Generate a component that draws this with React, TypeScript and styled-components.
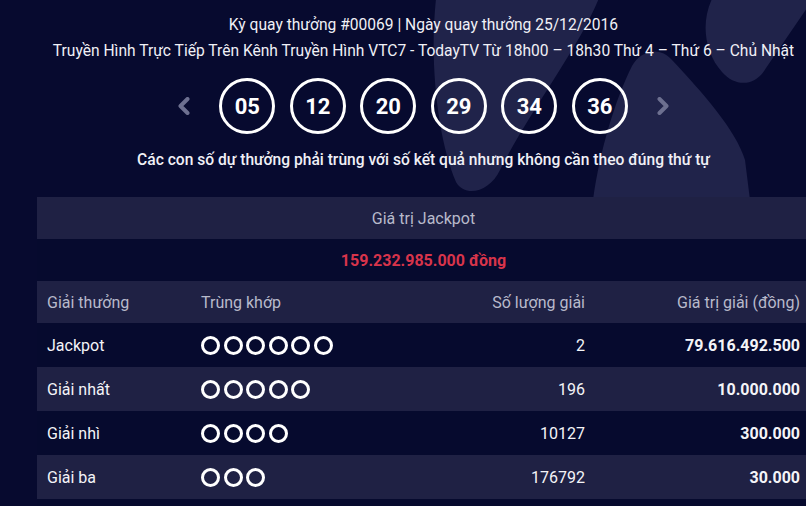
import React from "react";
import styled, { createGlobalStyle } from "styled-components";

const GlobalStyle = createGlobalStyle`
  html, body {
    margin: 0;
    padding: 0;
    background: #070a2f;
    overflow: hidden;
  }
  body {
    font-family: Roboto, "Noto Sans", "Liberation Sans", sans-serif;
    color: #f2f2f7;
  }
  * { box-sizing: border-box; }
`;

const Page = styled.div`
  position: relative;
  width: 806px;
  height: 506px;
  overflow: hidden;
  background: #070a2f;
`;

const Watermark = styled.svg`
  position: absolute;
  top: 0;
  left: 0;
  z-index: 0;
`;

const Content = styled.div`
  position: relative;
  z-index: 1;
  width: 773px;
  margin-left: 37px;
  padding-top: 12px;
  display: flex;
  flex-direction: column;
  align-items: center;
`;

const InfoLine = styled.div`
  font-size: 15.6px;
  line-height: 26px;
  white-space: nowrap;
  text-align: center;
  color: #f0f0f6;
`;

const BallRow = styled.div`
  display: flex;
  align-items: center;
  margin-top: 14px;
  height: 56px;
`;

const Arrow = styled.svg`
  width: 13px;
  height: 18px;
  flex: none;
`;

const Balls = styled.div`
  display: flex;
  gap: 14.5px;
  margin: 0 29px;
`;

const Ball = styled.div`
  width: 56px;
  height: 56px;
  border: 3px solid #ffffff;
  border-radius: 50%;
  display: flex;
  align-items: center;
  justify-content: center;
  font-size: 22px;
  font-weight: 700;
  color: #ffffff;
`;

const Note = styled.div`
  margin-top: 13px;
  font-size: 15.6px;
  line-height: 26px;
  font-weight: 500;
  white-space: nowrap;
  color: #f0f0f6;
`;

const Table = styled.div`
  align-self: stretch;
  margin-top: 24px;
  display: flex;
  flex-direction: column;
`;

const BannerRow = styled.div<{ $alt?: boolean; $red?: boolean }>`
  height: 42px;
  display: flex;
  align-items: center;
  justify-content: center;
  font-size: 16px;
  background: ${(p) => (p.$alt ? "#1f2144" : "#060a2e")};
  color: ${(p) => (p.$red ? "#d8344b" : "#b8bacb")};
  font-weight: ${(p) => (p.$red ? 700 : 400)};
`;

const GridRow = styled.div<{ $alt?: boolean; $head?: boolean }>`
  display: grid;
  grid-template-columns: 154px 229px 175px 215px;
  align-items: center;
  height: ${(p) => (p.$head ? "42px" : "44px")};
  background: ${(p) => (p.$alt ? "#1f2144" : "#060a2e")};
  color: ${(p) => (p.$head ? "#b8bacb" : "#f4f4f8")};
  font-size: 16px;
`;

const Cell = styled.div<{ $right?: boolean; $bold?: boolean }>`
  padding: 0 10px;
  text-align: ${(p) => (p.$right ? "right" : "left")};
  font-weight: ${(p) => (p.$bold ? 700 : 400)};
  white-space: nowrap;
`;

const Dots = styled.div`
  display: flex;
  gap: 3.6px;
`;

const Dot = styled.span`
  width: 19px;
  height: 19px;
  border: 3px solid #ffffff;
  border-radius: 50%;
`;

const Filler = styled.div`
  height: 20px;
  background: #060a2e;
`;

const numbers = ["05", "12", "20", "29", "34", "36"];

const prizes = [
  { name: "Jackpot", match: 6, count: "2", value: "79.616.492.500" },
  { name: "Giải nhất", match: 5, count: "196", value: "10.000.000" },
  { name: "Giải nhì", match: 4, count: "10127", value: "300.000" },
  { name: "Giải ba", match: 3, count: "176792", value: "30.000" },
];

export default function App() {
  return (
    <Page>
      <GlobalStyle />
      <Watermark width="806" height="200" viewBox="0 0 806 200">
        <g fill="#20234a">
          <path d="M437 -10 L602 -10 C585 40 530 110 500 170 C490 192 465 198 456 182 C438 140 428 60 437 -10 Z" />
          <path d="M593 200 C600 150 615 100 632 66 C641 50 660 46 672 60 C702 92 736 130 745 160 L750 200 Z" />
          <path d="M714 -5 C700 20 704 52 722 72 C736 88 756 86 766 68 L816 -5 Z" />
        </g>
      </Watermark>
      <Content>
        <InfoLine>Kỳ quay thưởng #00069 | Ngày quay thưởng 25/12/2016</InfoLine>
        <InfoLine>
          Truyền Hình Trực Tiếp Trên Kênh Truyền Hình VTC7 - TodayTV Từ 18h00 – 18h30 Thứ 4 – Thứ 6 – Chủ Nhật
        </InfoLine>
        <BallRow>
          <Arrow viewBox="0 0 13 18">
            <polyline points="10.5,2 3.5,9 10.5,16" fill="none" stroke="#6d7090" strokeWidth="4" strokeLinecap="round" strokeLinejoin="round" />
          </Arrow>
          <Balls>
            {numbers.map((n) => (
              <Ball key={n}>{n}</Ball>
            ))}
          </Balls>
          <Arrow viewBox="0 0 13 18">
            <polyline points="2.5,2 9.5,9 2.5,16" fill="none" stroke="#6d7090" strokeWidth="4" strokeLinecap="round" strokeLinejoin="round" />
          </Arrow>
        </BallRow>
        <Note>Các con số dự thưởng phải trùng với số kết quả nhưng không cần theo đúng thứ tự</Note>
        <Table>
          <BannerRow $alt>Giá trị Jackpot</BannerRow>
          <BannerRow $red>159.232.985.000 đồng</BannerRow>
          <GridRow $alt $head>
            <Cell>Giải thưởng</Cell>
            <Cell>Trùng khớp</Cell>
            <Cell $right>Số lượng giải</Cell>
            <Cell $right>Giá trị giải (đồng)</Cell>
          </GridRow>
          {prizes.map((p, i) => (
            <GridRow key={p.name} $alt={i % 2 === 1}>
              <Cell>{p.name}</Cell>
              <Cell>
                <Dots>
                  {Array.from({ length: p.match }).map((_, k) => (
                    <Dot key={k} />
                  ))}
                </Dots>
              </Cell>
              <Cell $right>{p.count}</Cell>
              <Cell $right $bold>{p.value}</Cell>
            </GridRow>
          ))}
          <Filler />
        </Table>
      </Content>
    </Page>
  );
}
